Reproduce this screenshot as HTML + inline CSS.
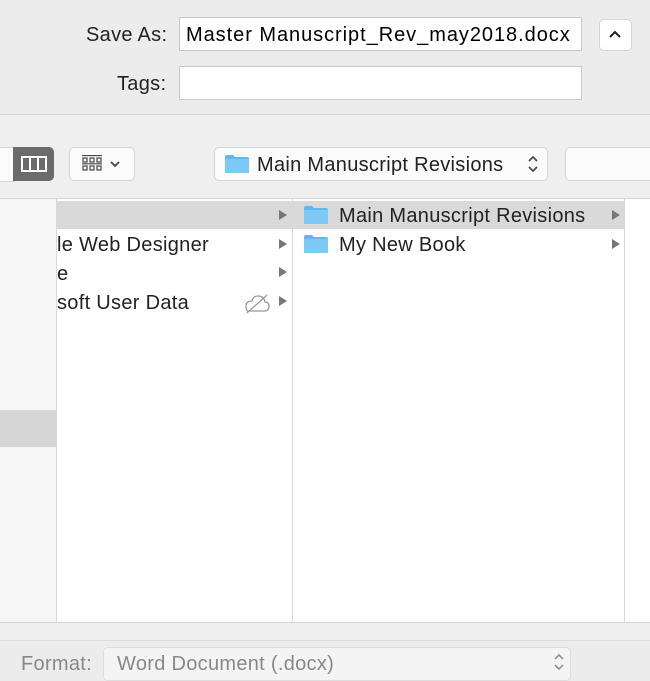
<!DOCTYPE html>
<html><head><style>
body{margin:0;width:650px;height:679px;overflow:hidden;background:#ececec;font-family:"Liberation Sans",sans-serif;position:relative}
.a{position:absolute}
.t{font-size:20px;color:#222;letter-spacing:0.3px}
.inp{background:#fff;border:1px solid #c8c8c8;box-sizing:border-box}
.btn{background:#fbfbfb;border:1px solid #d4d4d4;border-radius:5px;box-sizing:border-box}
.tri{width:0;height:0;border-left:8px solid #777;border-top:5px solid transparent;border-bottom:5px solid transparent}
.fold{width:24px;height:18px}
</style></head><body>
<div class="a t" style="left:86px;top:24px">Save As:</div>
<div class="a inp" style="left:179px;top:17px;width:403px;height:34px"></div>
<div class="a t" style="left:186px;top:24px;color:#000;letter-spacing:0.95px">Master Manuscript_Rev_may2018.docx</div>
<div class="a btn" style="left:599px;top:19px;width:33px;height:32px;background:#fff"></div>
<svg class="a" style="left:607px;top:28px" width="16" height="12"><path d="M3 9 L8 4 L13 9" stroke="#222" stroke-width="2" fill="none"/></svg>
<div class="a t" style="left:117px;top:73px">Tags:</div>
<div class="a inp" style="left:179px;top:66px;width:403px;height:34px"></div>
<div class="a" style="left:0;top:114px;width:650px;height:1px;background:#d6d6d6"></div>
<div class="a" style="left:0;top:115px;width:650px;height:83px;background:#efefef"></div>
<div class="a" style="left:0;top:147px;width:14px;height:33px;background:#fbfbfb;border:1px solid #d4d4d4;border-left:none"></div>
<div class="a" style="left:13px;top:147px;width:41px;height:34px;background:#6b6b6b;border-radius:0 5px 5px 0"></div>
<svg class="a" style="left:21px;top:156px" width="26" height="16"><rect x="1" y="1" width="24" height="14" fill="none" stroke="#fff" stroke-width="2"/><path d="M9 1V15M17 1V15" stroke="#fff" stroke-width="2"/></svg>
<div class="a btn" style="left:69px;top:147px;width:66px;height:34px"></div>
<svg class="a" style="left:81px;top:155px" width="46" height="18"><g fill="none" stroke="#444" stroke-width="1.2"><rect x="2" y="3" width="4" height="4"/><rect x="9" y="3" width="4" height="4"/><rect x="16" y="3" width="4" height="4"/><rect x="2" y="11" width="4" height="4"/><rect x="9" y="11" width="4" height="4"/><rect x="16" y="11" width="4" height="4"/><path d="M1 0.5H21M1 8.8H21" /><path d="M30 7L34 11L38 7" stroke-width="1.8"/></g></svg>
<div class="a btn" style="left:214px;top:147px;width:334px;height:34px"></div>
<svg class="a fold" style="left:225px;top:155px" viewBox="0 0 24 18"><path d="M0 2Q0 0 2 0H8L10 2H22Q24 2 24 4V18H0Z" fill="#5fb8ef"/><rect x="0" y="4" width="24" height="14" fill="#7dcaf7"/></svg>
<div class="a t" style="left:257px;top:154px">Main Manuscript Revisions</div>
<svg class="a" style="left:526px;top:152px" width="14" height="24"><path d="M3 9L7 5L11 9M3 15L7 19L11 15" stroke="#444" stroke-width="1.6" fill="none"/></svg>
<div class="a btn" style="left:565px;top:147px;width:100px;height:34px"></div>
<div class="a" style="left:0;top:198px;width:650px;height:1px;background:#d6d6d6"></div>
<div class="a" style="left:0;top:199px;width:56px;height:423px;background:#f6f6f6"></div>
<div class="a" style="left:0;top:410px;width:56px;height:37px;background:#d6d6d6"></div>
<div class="a" style="left:56px;top:199px;width:1px;height:423px;background:#d8d8d8"></div>
<div class="a" style="left:57px;top:199px;width:593px;height:423px;background:#fff"></div>
<div class="a" style="left:292px;top:199px;width:1px;height:423px;background:#d8d8d8"></div>
<div class="a" style="left:624px;top:199px;width:1px;height:423px;background:#d8d8d8"></div>
<div class="a" style="left:57px;top:201px;width:235px;height:28px;background:#d9d9d9"></div>
<div class="a" style="left:293px;top:201px;width:331px;height:28px;background:#d9d9d9"></div>
<div class="a tri" style="left:279px;top:210px"></div>
<div class="a tri" style="left:279px;top:239px"></div>
<div class="a tri" style="left:279px;top:267px"></div>
<div class="a tri" style="left:279px;top:296px"></div>
<div class="a tri" style="left:612px;top:210px"></div>
<div class="a tri" style="left:612px;top:239px"></div>
<div class="a t" style="left:57px;top:234px">le Web Designer</div>
<div class="a t" style="left:57px;top:263px">e</div>
<div class="a t" style="left:57px;top:292px">soft User Data</div>
<svg class="a" style="left:242px;top:291px" width="30" height="24"><path d="M6 20H22Q27 20 27 15Q27 11 23 11Q22 5 16 5Q11 5 10 10Q4 10 4 15Q4 20 6 20Z" fill="none" stroke="#999" stroke-width="1.3"/><path d="M5 22L25 4" stroke="#999" stroke-width="1.3"/></svg>
<svg class="a fold" style="left:304px;top:206px" viewBox="0 0 24 18"><path d="M0 2Q0 0 2 0H8L10 2H22Q24 2 24 4V18H0Z" fill="#5fb8ef"/><rect x="0" y="4" width="24" height="14" fill="#7dcaf7"/></svg>
<div class="a t" style="left:339px;top:205px">Main Manuscript Revisions</div>
<svg class="a fold" style="left:304px;top:235px" viewBox="0 0 24 18"><path d="M0 2Q0 0 2 0H8L10 2H22Q24 2 24 4V18H0Z" fill="#5fb8ef"/><rect x="0" y="4" width="24" height="14" fill="#7dcaf7"/></svg>
<div class="a t" style="left:339px;top:234px">My New Book</div>
<div class="a" style="left:0;top:622px;width:650px;height:1px;background:#d6d6d6"></div>
<div class="a" style="left:0;top:623px;width:650px;height:17px;background:#eeeeee"></div>
<div class="a" style="left:0;top:640px;width:650px;height:1px;background:#dcdcdc"></div>
<div class="a t" style="left:21px;top:653px;color:#888">Format:</div>
<div class="a" style="left:103px;top:647px;width:468px;height:34px;background:#f4f4f4;border:1px solid #ddd;border-radius:5px;box-sizing:border-box"></div>
<div class="a t" style="left:117px;top:653px;color:#888">Word Document (.docx)</div>
<svg class="a" style="left:552px;top:650px" width="14" height="24"><path d="M3 9L7 5L11 9M3 15L7 19L11 15" stroke="#888" stroke-width="1.5" fill="none"/></svg>
</body></html>
